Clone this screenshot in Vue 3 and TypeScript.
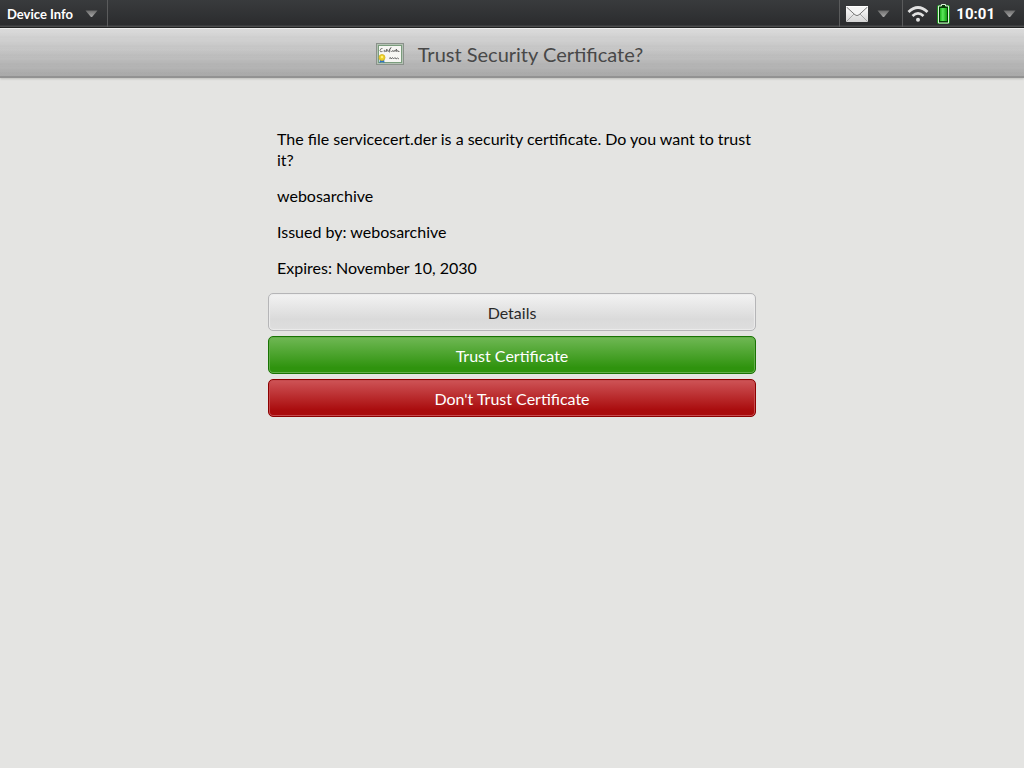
<script setup lang="ts">
import { ref } from 'vue'

interface Action {
  label: string
  kind: string
}

const fileName = ref<string>('servicecert.der')
const details: string[] = ['webosarchive', 'Issued by: webosarchive', 'Expires: November 10, 2030']
const actions: Action[] = [
  { label: 'Details', kind: 'neutral' },
  { label: 'Trust Certificate', kind: 'affirmative' },
  { label: "Don't Trust Certificate", kind: 'negative' },
]
</script>

<template>
  <div class="screen">
    <nav class="status" aria-label="Status bar">
      <button type="button" class="app-menu">
        <span>Device Info</span>
        <svg class="arrow" width="13" height="8" viewBox="0 0 13 8" aria-hidden="true">
          <path d="M0.5 0.5H12.5L7.5 6.5Q6.5 7.5 5.5 6.5Z" fill="url(#arrowFill)" />
        </svg>
      </button>
      <button type="button" class="mail" aria-label="Messages">
        <svg width="24" height="18" viewBox="0 0 24 18" aria-hidden="true">
          <rect x="1" y="1" width="22" height="16" rx="1" fill="url(#mailFill)" />
          <path d="M1.5 16.5L9 9M22.5 16.5L15 9" stroke="#a5a5a5" fill="none" />
          <path d="M1.5 2L10 9.8Q12 11.4 14 9.8L22.5 2" stroke="#777" fill="#f4f4f4" />
          <path d="M1 1.5H23" stroke="#fff" />
        </svg>
        <svg class="arrow" width="13" height="8" viewBox="0 0 13 8" aria-hidden="true">
          <path d="M0.5 0.5H12.5L7.5 6.5Q6.5 7.5 5.5 6.5Z" fill="url(#arrowFill)" />
        </svg>
      </button>
      <button type="button" class="system" aria-label="System menu, 10:01">
        <svg width="22" height="18" viewBox="0 0 22 18" aria-hidden="true">
          <defs>
            <linearGradient id="arrowFill" x1="0" y1="0" x2="0" y2="1">
              <stop offset="0" stop-color="#6c6c6c" />
              <stop offset="1" stop-color="#a8a8a8" />
            </linearGradient>
            <linearGradient id="mailFill" x1="0" y1="0" x2="0" y2="1">
              <stop offset="0" stop-color="#fff" />
              <stop offset="1" stop-color="#d4d4d4" />
            </linearGradient>
            <linearGradient id="batteryFill" x1="0" y1="0" x2="1" y2="0">
              <stop offset="0" stop-color="#1db31d" />
              <stop offset="0.4" stop-color="#5be85b" />
              <stop offset="1" stop-color="#12a012" />
            </linearGradient>
          </defs>
          <g fill="none" stroke="#e2e2e2">
            <path d="M1.5 7Q11 -2 20.5 7" stroke-width="2.8" />
            <path d="M5.5 11Q11 5.6 16.5 11" stroke-width="2.6" />
          </g>
          <circle cx="11" cy="14.7" r="2" fill="#e2e2e2" />
        </svg>
        <svg class="battery" width="15" height="22" viewBox="0 0 15 22" aria-hidden="true">
          <rect x="1" y="2" width="13" height="19" rx="2" fill="#12b012" opacity="0.75" />
          <path d="M5.5 1.5H9.5V3H12.5V20H2.5V3H5.5Z" fill="#073c07" stroke="#d9f5d9" />
          <rect x="4" y="5" width="7" height="13" fill="url(#batteryFill)" />
        </svg>
        <span class="time">10:01</span>
        <svg class="arrow" width="13" height="8" viewBox="0 0 13 8" aria-hidden="true">
          <path d="M0.5 0.5H12.5L7.5 6.5Q6.5 7.5 5.5 6.5Z" fill="url(#arrowFill)" />
        </svg>
      </button>
    </nav>

    <header class="title-bar">
      <svg width="28" height="22" viewBox="0 0 28 22" aria-hidden="true">
        <rect x="0.5" y="0.5" width="27" height="21" fill="#b4c2b4" stroke="#8b918b" />
        <rect x="2.5" y="2.5" width="23" height="17" fill="#f6f6f3" stroke="#7b9d7d" />
        <path
          d="M6.500 5.500Q4.500 5 4 7.500Q4 9.500 6.500 8.500M7.500 8Q9 6.500 8.500 8T10 8L11 6L10.500 8.500L12 7.500L12.500 8.500L15 4.500Q13 6 13.500 9.500M14.500 8L15.500 8.500L17 7.500L17 8.500L19 7.500L19 8.500L20.500 6V8.500L22 7.500L22 8.500H23.500"
          fill="none"
          stroke="#4a4a4a"
          stroke-width="0.7"
        />
        <path d="M13 15.500L14.500 14.500L15 16L16.500 14.500L17.500 16L19 14.500L20 16L21.500 15L23 16" fill="none" stroke="#555" stroke-width="0.8" />
        <path d="M4 15L3.500 20L6 19L8.500 20L8 15Z" fill="#2f75c4" />
        <circle cx="6" cy="14.500" r="3" fill="#ecd028" stroke="#d3b122" stroke-width="0.8" />
        <circle cx="6" cy="14" r="1.200" fill="#fff27a" />
      </svg>
      <h1>Trust Security Certificate?</h1>
    </header>

    <main class="content">
      <section class="message">
        <p>The file {{ fileName }} is a security certificate. Do you want to trust it?</p>
        <p v-for="line in details" :key="line">{{ line }}</p>
      </section>
      <div class="actions">
        <button v-for="action in actions" :key="action.kind" type="button" class="action" :class="action.kind">
          {{ action.label }}
        </button>
      </div>
    </main>
  </div>
</template>

<style>
body {
  margin: 0;
  background: #e4e4e2;
}
</style>

<style scoped>
.screen {
  min-height: 100vh;
  background: #e4e4e2;
  color: #000;
  font-family: Lato, "Open Sans", sans-serif;
  font-size: 16px;
}

button {
  font: inherit;
  margin: 0;
  cursor: pointer;
}

.status {
  display: flex;
  height: 28px;
  box-sizing: border-box;
  border-bottom: 1px solid #161718;
  background: linear-gradient(#393b3d, #2b2c2e 92%, #4a4b4c 97%);
}

.status button {
  display: flex;
  align-items: center;
  border: 0;
  padding: 0 8px;
  background: none;
  color: #fff;
  font-weight: 700;
}

.status .app-menu {
  gap: 12px;
  margin-right: auto;
  padding: 0 9px 0 7px;
  border-right: 1px solid #5a5b5c;
  font-size: 13px;
}

.status .mail {
  gap: 8px;
  padding: 0 12px 0 5px;
  border-left: 1px solid #5a5b5c;
}

.status .system {
  padding: 0 8px 0 4px;
  border-left: 1px solid #5a5b5c;
  font-family: Roboto, sans-serif;
  font-size: 15px;
}

.battery {
  margin-left: 7px;
}

.time {
  margin: 0 8px 0 5px;
}

.title-bar {
  display: flex;
  align-items: center;
  justify-content: center;
  gap: 14px;
  height: 50px;
  box-sizing: border-box;
  padding: 2px 5px 0 0;
  border-top: 1px solid #ededed;
  border-bottom: 2px solid #929292;
  box-shadow: 0 1px 2px #bdbdbb;
  background:
    repeating-linear-gradient(#fff0 0 2px, #ffffff0f 3px, #fff0 4px 7px, #00000005 8px, #fff0 9px),
    linear-gradient(#dadada, #a9a9a9);
}

h1 {
  margin: 0;
  color: #484848;
  font-size: 20px;
  font-weight: 400;
  line-height: 24px;
}

.content {
  max-width: 488px;
  margin: 0 auto;
  padding: 50px 12px;
}

.message {
  padding-left: 9px;
}

.message p {
  margin: 0 0 15px;
  line-height: 21px;
}

.actions {
  display: grid;
  gap: 5px;
}

.action {
  height: 38px;
  padding: 0 12px;
  border: 1px solid;
  border-radius: 5px;
}

.neutral {
  border-color: #b5b5b7;
  background: linear-gradient(#f3f3f3, #dadada 70%, #dedede);
  box-shadow: inset 0 0 1px 1px #ebebeb;
  color: #292929;
}

.affirmative {
  border-color: #197303;
  background: linear-gradient(#70b855, #2f930e 85%);
  box-shadow: inset 0 0 0 1px #64ae4b;
  color: #fff;
}

.negative {
  border-color: #8c0000;
  background: linear-gradient(#ce5457, #a90b0c 85%);
  box-shadow: inset 0 0 0 1px #c64b4e;
  color: #fff;
}
</style>
